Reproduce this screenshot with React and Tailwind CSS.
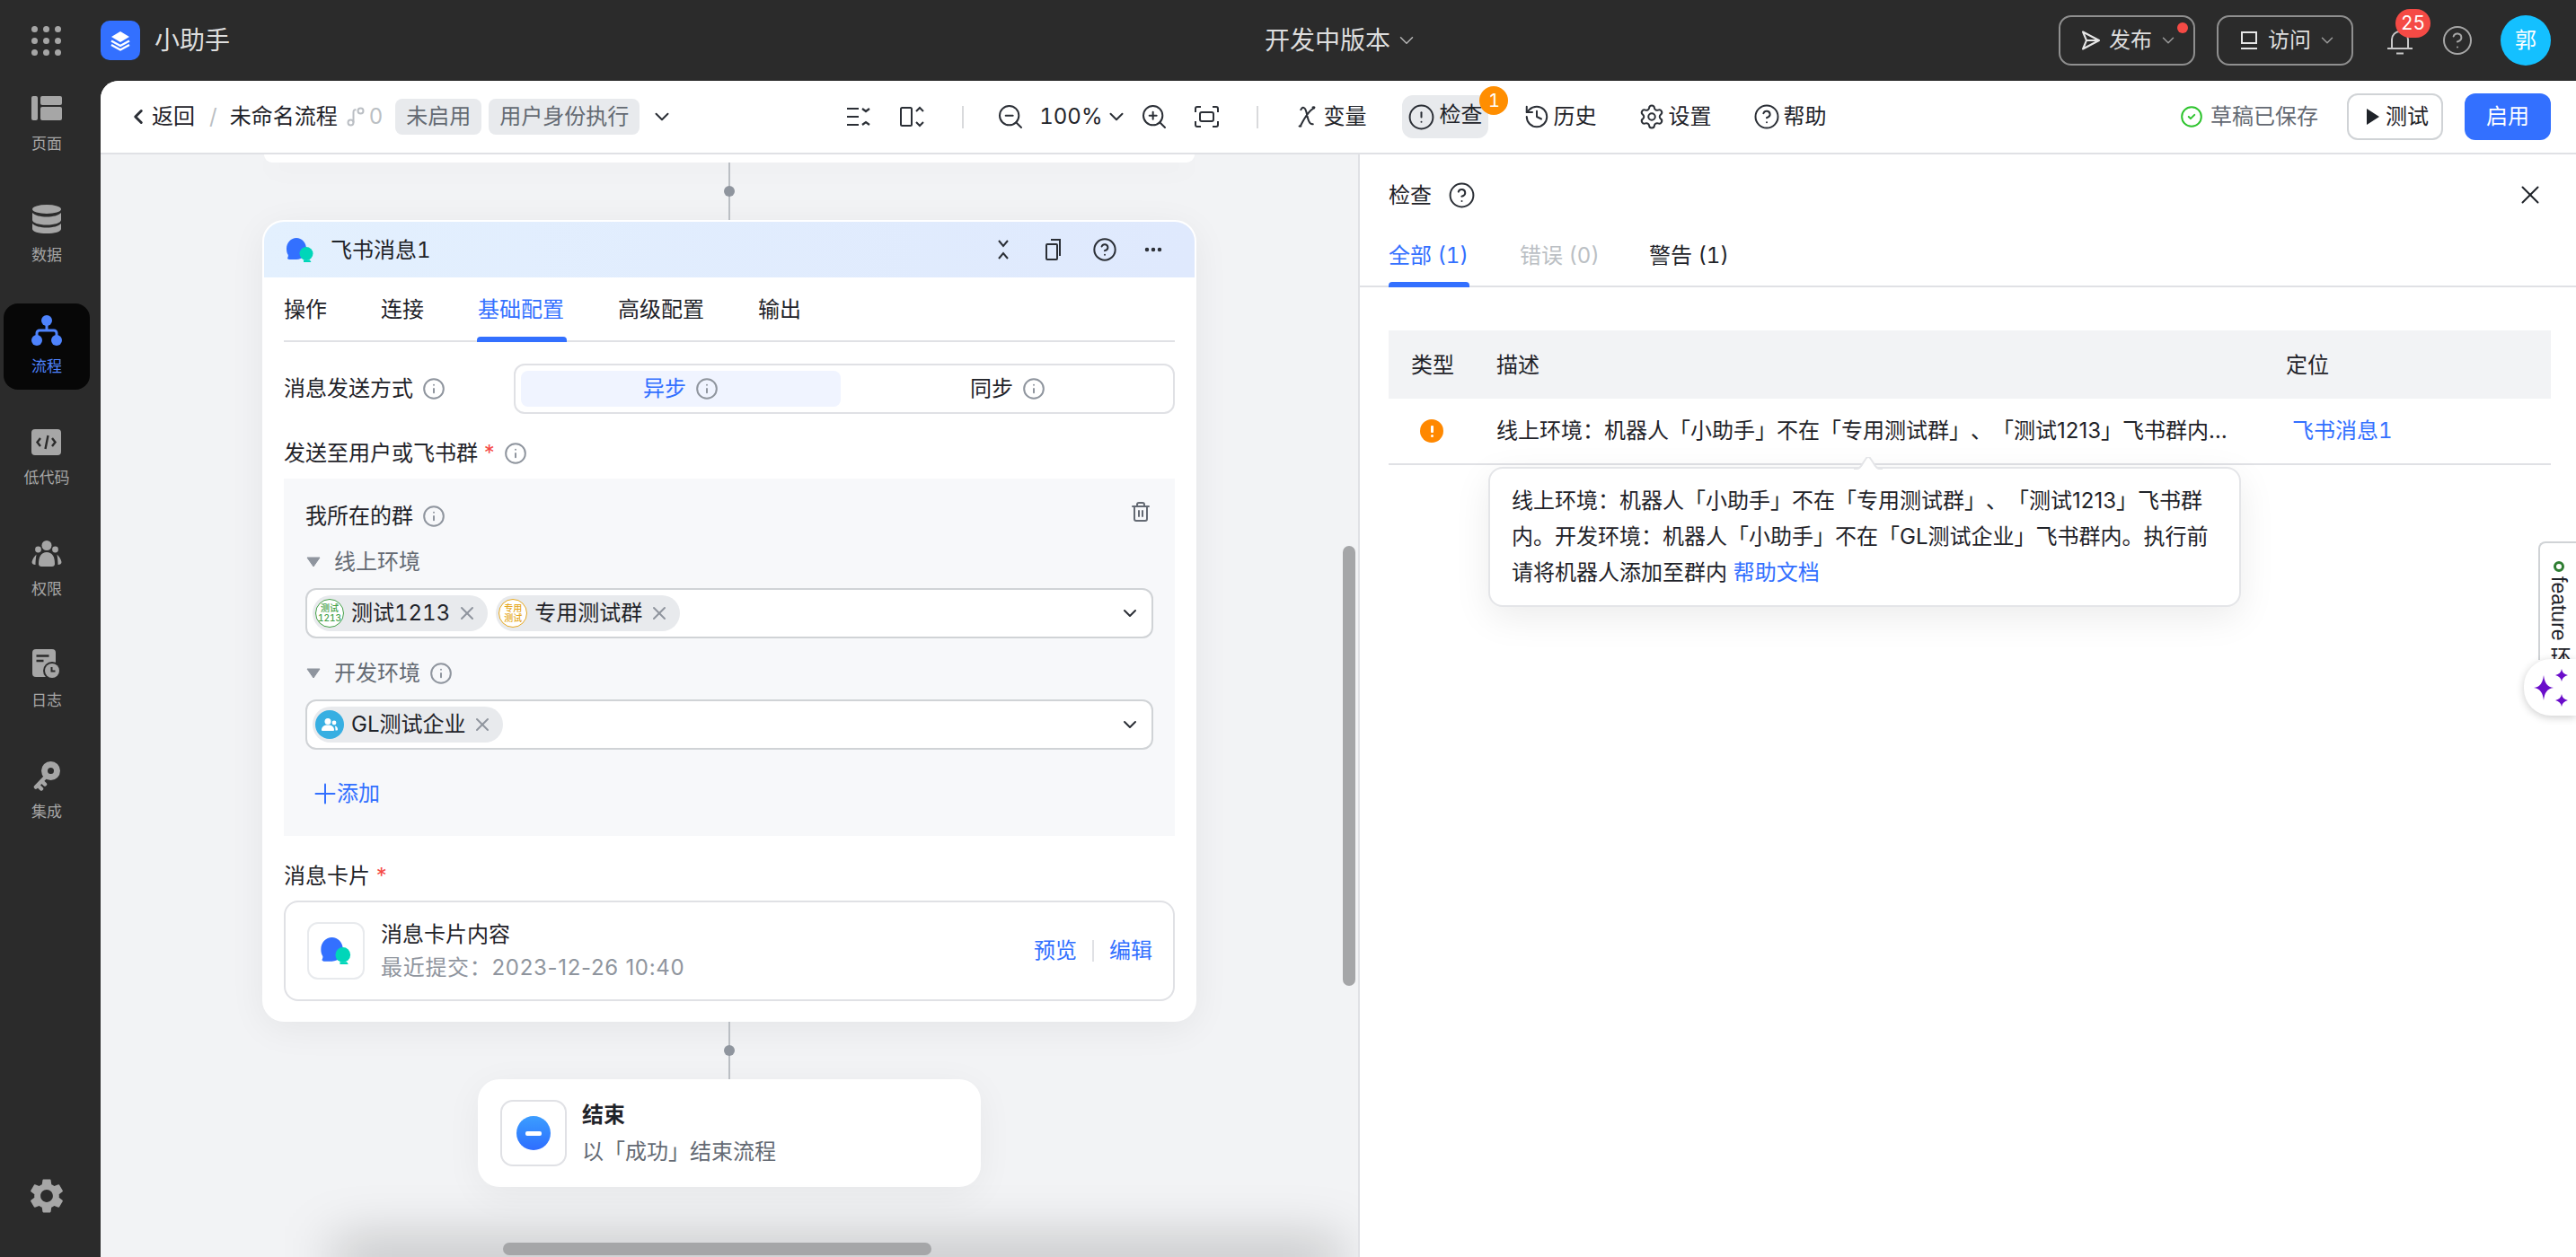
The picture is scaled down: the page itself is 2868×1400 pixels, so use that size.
import React from "react";
import { ChevronDown, ChevronLeft, CircleAlert, CircleCheck, CircleHelp, Ellipsis, History, Info, Settings, Trash2, X, ZoomIn, ZoomOut, Plus } from "lucide-react";
import { MdSettings } from "react-icons/md";

const Sp = (p) => <span {...p} />;

function LogoIcon() {
  return (
    <svg width="24" height="24" viewBox="0 0 24 24" fill="none">
      <path d="M12 2 L22 8 L12 14 L2 8 Z" fill="#fff" />
      <path d="M2 12.5 L12 18 L22 12.5" stroke="#fff" strokeWidth="2.4" strokeLinejoin="round" />
      <path d="M2 17 L12 22.5 L22 17" stroke="#fff" strokeWidth="2.4" strokeLinejoin="round" />
    </svg>
  );
}

function NavIcon({ name }) {
  const g = "#a6a6a6";
  const d = "#2b2b2b";
  if (name === "pages")
    return (
      <svg width="34" height="27" viewBox="0 0 34 27" fill={g}>
        <rect width="7" height="27" rx="2" />
        <rect x="10" width="24" height="10" rx="2" />
        <rect x="10" y="12" width="24" height="15" rx="2" />
      </svg>
    );
  if (name === "data")
    return (
      <svg width="32" height="32" viewBox="0 0 32 32" fill={g}>
        <ellipse cx="16" cy="5" rx="16" ry="5" />
        <path d="M0 9c3 3 9 4.5 16 4.5S29 12 32 9v8c0 3-7 5.5-16 5.5S0 20 0 17z" />
        <path d="M0 21c3 3 9 4.5 16 4.5S29 24 32 21v6c0 3-7 5-16 5S0 30 0 27z" />
      </svg>
    );
  if (name === "flow")
    return (
      <svg width="34" height="34" viewBox="0 0 34 34" fill="#4e83fd">
        <circle cx="17" cy="6" r="6" />
        <circle cx="6" cy="28" r="6" />
        <circle cx="28" cy="28" r="6" />
        <path d="M17 10v7M6 25v-5a3 3 0 0 1 3-3h16a3 3 0 0 1 3 3v5" fill="none" stroke="#4e83fd" strokeWidth="3" />
      </svg>
    );
  if (name === "code")
    return (
      <svg width="34" height="29" viewBox="0 0 34 29">
        <rect width="33" height="29" rx="4" fill={g} />
        <path d="M10 10l-3.5 4.5L10 19M23 10l3.5 4.5L23 19M18.5 7l-3 15" fill="none" stroke={d} strokeWidth="2.4" />
      </svg>
    );
  if (name === "perm")
    return (
      <svg width="34" height="29" viewBox="0 0 34 29" fill={g}>
        <circle cx="17" cy="5.5" r="5.5" />
        <circle cx="7.5" cy="10" r="3.4" />
        <circle cx="26.5" cy="10" r="3.4" />
        <path d="M8 26c0-8 3-13 9-13s9 5 9 13c0 2-1.500 3-3 3H11c-1.500 0-3-1-3-3z" />
        <path d="M5.500 15.500C3 18 1 21 0.500 24c0 2 1.500 3 4 3 0-4 .5-8 1-11.500zM28.500 15.500c2.500 2.500 4.500 5.500 5 8.500 0 2-1.500 3-4 3 0-4-.5-8-1-11.500z" />
      </svg>
    );
  if (name === "log")
    return (
      <svg width="32" height="34" viewBox="0 0 32 34">
        <rect width="26" height="31" rx="4" fill={g} />
        <path d="M4.500 7.500h14M4.500 13h8" stroke={d} strokeWidth="2.4" />
        <circle cx="22" cy="24" r="10" fill={d} />
        <circle cx="22" cy="24" r="8" fill={g} />
        <path d="M21.500 20v4.500h4" fill="none" stroke={d} strokeWidth="2" />
      </svg>
    );
  return (
    <svg width="30" height="33" viewBox="0 0 30 33">
      <circle cx="19.500" cy="10.500" r="10.500" fill={g} />
      <circle cx="19.500" cy="10.500" r="3.500" fill={d} />
      <path d="M14 17L3 28.500M5 26.500l4 4M9.500 22l3.500 3.500" stroke={g} strokeWidth="4.500" fill="none" strokeLinecap="round" />
    </svg>
  );
}

function NavItem({ icon, label, active }) {
  return (
    <div className={active ? "flex h-[96px] w-[96px] flex-col items-center rounded-[16px] bg-[#070707]" : "flex h-[96px] w-[96px] flex-col items-center"}>
      <div className="flex h-[60px] items-center justify-center">
        <NavIcon name={icon} />
      </div>
      <Sp className={active ? "text-[17px] leading-[20px] text-[#4e83fd]" : "text-[17px] leading-[20px] text-[#a6a6a6]"}>{label}</Sp>
    </div>
  );
}

function FeishuIcon({ w = 32, h = 27 }) {
  return (
    <svg width={w} height={h} viewBox="0 0 32 27">
      <path d="M1 12C1 5 6 0 12 0s11 5 11 12-4 12-11 12H4c-1 0-2-1-2-1.500.8-1.500 1-2.500 .8-3.500C1.500 17 1 15 1 12z" fill="#3370ff" />
      <circle cx="23" cy="17.500" r="7.500" fill="#00d6b9" />
      <path d="M20 24.500h7c.5 1 .8 1.800 1.500 2.500H20z" fill="#00d6b9" />
    </svg>
  );
}

function Connector() {
  return (
    <div className="relative flex h-[64px] w-[12px] shrink-0 justify-center">
      <div className="h-full w-[2px] bg-[#bbbfc4]" />
      <div className="absolute top-[26px] h-[12px] w-[12px] rounded-full bg-[#8f959e]" />
    </div>
  );
}

const InfoI = ({ color = "#8f959e" }) => <Info size={26} color={color} strokeWidth={2} absoluteStrokeWidth className="shrink-0" />;

function Chip({ children, avatar }) {
  return (
    <div className="flex h-[40px] items-center rounded-full bg-[#e8eaed] pl-[3px] pr-[11px]">
      {avatar}
      <Sp className="ml-[8px] whitespace-nowrap text-[#1f2329]">{children}</Sp>
      <X size={24} color="#8f959e" strokeWidth={2} absoluteStrokeWidth className="ml-[7px]" />
    </div>
  );
}

function TextAvatar({ a, b, color }) {
  return (
    <div className="flex h-[32px] w-[32px] shrink-0 flex-col items-center justify-center rounded-full border-[1.5px] bg-white text-[10px] font-medium leading-[11px]" style={{ borderColor: color, color }}>
      <Sp>{a}</Sp>
      <Sp>{b}</Sp>
    </div>
  );
}

function TeamAvatar() {
  return (
    <div className="flex h-[32px] w-[32px] shrink-0 items-center justify-center rounded-full bg-[#37afe2]">
      <svg width="18" height="14" viewBox="0 0 18 14" fill="#fff">
        <circle cx="7" cy="3.500" r="3.500" />
        <path d="M0 13c0-3.500 2.500-5.500 7-5.500s7 2 7 5.500c0 .5-.5 1-1 1H1c-.5 0-1-.5-1-1z" />
        <circle cx="14" cy="5" r="2.400" />
        <path d="M15 8.500c2 .5 3 2 3 4 0 .5-.5 1-1 1h-1.500c0-2-.2-3.500-.5-5z" />
      </svg>
    </div>
  );
}

function SelectBox({ children }) {
  return (
    <div className="flex h-[56px] items-center gap-[9px] rounded-[12px] border-2 border-[#d0d3d6] bg-white pl-[6px] pr-[12px]">
      {children}
      <ChevronDown size={24} color="#2b2f36" strokeWidth={2} absoluteStrokeWidth className="ml-auto" />
    </div>
  );
}

function EnvTitle({ children, info }) {
  return (
    <div className="flex h-[32px] items-center text-[#646a73]">
      <svg width="16" height="12" viewBox="0 0 16 12" className="ml-[1px]">
        <path d="M1 1h14L8 11z" fill="#8f959e" stroke="#8f959e" strokeLinejoin="round" />
      </svg>
      <Sp className="ml-[15px]">{children}</Sp>
      {info && <div className="ml-[10px]"><InfoI /></div>}
    </div>
  );
}

function FlowCard() {
  return (
    <div className="w-[1040px] shrink-0 overflow-hidden rounded-[24px] border-2 border-white bg-white shadow-[0_8px_40px_rgba(0,0,0,0.06)]">
      <div className="flex h-[62px] items-center bg-gradient-to-r from-[#e3f0fe] to-[#dfe9fd] pl-[24px] pr-[34px]">
        <FeishuIcon />
        <Sp className="ml-[18px] pt-[2px]">飞书消息1</Sp>
        <div className="ml-auto flex items-center">
          <svg width="14" height="24" viewBox="0 0 14 24" fill="none" stroke="#2b2f36" strokeWidth="2">
            <path d="M2 2l5 6 5-6M2 22l5-6 5 6" />
          </svg>
          <svg width="20" height="26" viewBox="0 0 20 26" fill="none" stroke="#2b2f36" strokeWidth="2" className="ml-[39px]">
            <rect x="2" y="7" width="12" height="17" rx="1" />
            <path d="M7 2h10v18" />
          </svg>
          <CircleHelp size={28} color="#2b2f36" strokeWidth={2} absoluteStrokeWidth className="ml-[33px]" />
          <Ellipsis size={24} color="#2b2f36" strokeWidth={2.500} className="ml-[28px]" />
        </div>
      </div>
      <div className="px-[22px] pb-[21px]">
        <div className="flex h-[72px] gap-[60px] border-b-2 border-[#e0e1e5]">
          <Sp className="flex items-center pt-[2px]">操作</Sp>
          <Sp className="flex items-center pt-[2px]">连接</Sp>
          <Sp className="relative flex items-center pt-[2px] text-[#3370ff]">
            基础配置
            <Sp className="absolute -bottom-[2px] -left-[1px] -right-[3px] h-[6px] rounded-t-[4px] bg-[#3370ff]" />
          </Sp>
          <Sp className="flex items-center pt-[2px]">高级配置</Sp>
          <Sp className="flex items-center pt-[2px]">输出</Sp>
        </div>
        <div className="mt-[24px] flex items-center">
          <div className="flex w-[256px] items-center gap-[10px]">消息发送方式<InfoI /></div>
          <div className="flex h-[56px] w-[736px] items-center gap-[8px] rounded-[12px] border-2 border-[#e0e1e5] p-[6px]">
            <div className="flex h-[40px] flex-1 items-center justify-center gap-[10px] rounded-[8px] bg-[#f0f4ff] text-[#3370ff]">异步<InfoI /></div>
            <div className="flex h-[40px] flex-1 items-center justify-center gap-[10px]">同步<InfoI /></div>
          </div>
        </div>
        <div className="mt-[28px] flex h-[32px] items-center">
          发送至用户或飞书群<Sp className="ml-[5px] text-[#f54a45]">*</Sp>
          <div className="ml-[8px]"><InfoI /></div>
        </div>
        <div className="mt-[12px] bg-[#f7f8fa] px-[24px] pb-[31px] pt-[26px]">
          <div className="flex h-[32px] items-center gap-[10px]">
            我所在的群<InfoI />
            <Trash2 size={24} color="#646a73" strokeWidth={2} absoluteStrokeWidth className="-mt-[10px] ml-auto mr-[2px]" />
          </div>
          <div className="mt-[19px]"><EnvTitle>线上环境</EnvTitle></div>
          <div className="mt-[13px]">
            <SelectBox>
              <Chip avatar={<TextAvatar a="测试" b="1213" color="#43a047" />}>测试1213</Chip>
              <Chip avatar={<TextAvatar a="专用" b="测试" color="#e5a823" />}>专用测试群</Chip>
            </SelectBox>
          </div>
          <div className="mt-[23px]"><EnvTitle info>开发环境</EnvTitle></div>
          <div className="mt-[13px]">
            <SelectBox>
              <Chip avatar={<TeamAvatar />}>GL测试企业</Chip>
            </SelectBox>
          </div>
          <div className="mt-[33px] flex h-[32px] items-center text-[#3370ff]">
            <Plus size={36} color="#3370ff" strokeWidth={2} absoluteStrokeWidth className="-mr-[5px] ml-[4px]" />
            添加
          </div>
        </div>
        <div className="mt-[28px] flex h-[32px] items-center pt-[2px]">消息卡片<Sp className="ml-[5px] text-[#f54a45]">*</Sp></div>
        <div className="mt-[12px] flex h-[112px] items-center rounded-[16px] border-2 border-[#e0e1e5] pl-[24px] pr-[23px]">
          <div className="flex h-[64px] w-[64px] items-center justify-center rounded-[12px] border-2 border-[#e8eaed]">
            <FeishuIcon w={36} h={30} />
          </div>
          <div className="ml-[18px] flex flex-col gap-[5px]">
            <Sp>消息卡片内容</Sp>
            <Sp className="normal-nums tracking-[0.7px] text-[#8f959e]">最近提交：2023-12-26 10:40</Sp>
          </div>
          <div className="ml-auto flex items-center text-[#3370ff]">
            预览
            <Sp className="mx-[17px] h-[24px] w-[2px] bg-[#e0e1e5]" />
            编辑
          </div>
        </div>
      </div>
    </div>
  );
}

function EndCard() {
  return (
    <div className="flex h-[120px] w-[560px] shrink-0 items-center rounded-[24px] bg-white pl-[25px] shadow-[0_8px_40px_rgba(0,0,0,0.05)]">
      <div className="flex h-[74px] w-[74px] items-center justify-center rounded-[14px] border-2 border-[#e0e1e5]">
        <div className="flex h-[38px] w-[38px] items-center justify-center rounded-full bg-gradient-to-b from-[#3c9dff] to-[#2f6dff]">
          <div className="h-[5px] w-[18px] rounded-[2px] bg-white" />
        </div>
      </div>
      <div className="ml-[17px] flex flex-col gap-[9px]">
        <Sp className="font-semibold">结束</Sp>
        <Sp className="text-[#646a73]">以「成功」结束流程</Sp>
      </div>
    </div>
  );
}

function Canvas() {
  return (
    <div className="relative flex flex-1 flex-col items-center overflow-hidden bg-[#f2f3f5]">
      <div className="h-[9px] w-[1036px] shrink-0 rounded-b-[20px] bg-white shadow-[0_8px_30px_rgba(0,0,0,0.04)]" />
      <Connector />
      <FlowCard />
      <Connector />
      <EndCard />
      <div className="absolute -bottom-[24px] left-[260px] right-[20px] h-[40px] bg-black/25 blur-[30px]" />
      <div className="absolute bottom-[2px] left-[448px] h-[14px] w-[477px] rounded-full bg-[#a5a6a8]" />
      <div className="absolute right-[3px] top-[436px] h-[490px] w-[14px] rounded-full bg-[#a5a6a8]" />
    </div>
  );
}

function Panel() {
  const full = "线上环境：机器人「小助手」不在「专用测试群」、「测试1213」飞书群内。开发环境：机器人「小助手」不在「GL测试企业」飞书群内。执行前请将机器人添加至群内";
  return (
    <div className="relative w-[1356px] shrink-0 border-l-2 border-[#e0e1e5] bg-white">
      <div className="flex h-[62px] items-end pl-[32px] pr-[34px]">
        <Sp>检查</Sp>
        <CircleHelp size={31} color="#2b2f36" strokeWidth={2} absoluteStrokeWidth className="mb-[1px] ml-[18px]" />
        <X size={34} color="#1f2329" strokeWidth={2} absoluteStrokeWidth className="ml-auto" />
      </div>
      <div className="flex border-b-2 border-[#e0e1e5] pb-[17px] pl-[32px] pt-[35px]">
        <Sp className="relative w-[90px] whitespace-nowrap text-[#3370ff]">
          全部 (1)
          <Sp className="absolute -bottom-[19px] left-0 h-[6px] w-[90px] rounded-t-[4px] bg-[#3370ff]" />
        </Sp>
        <Sp className="ml-[56px] w-[90px] whitespace-nowrap text-[#bbbfc4]">错误 (0)</Sp>
        <Sp className="ml-[54px] w-[90px] whitespace-nowrap">警告 (1)</Sp>
      </div>
      <div className="ml-[32px] mr-[28px] mt-[48px]">
        <div className="grid h-[76px] grid-cols-[120px_879px_1fr] items-center bg-[#f2f3f5] pt-[2px]">
          <Sp className="pl-[25px]">类型</Sp>
          <Sp>描述</Sp>
          <Sp>定位</Sp>
        </div>
        <div className="grid h-[74px] grid-cols-[120px_879px_1fr] items-center border-b-2 border-[#e0e1e5]">
          <div className="pl-[35px]">
            <div className="flex h-[26px] w-[26px] items-center justify-center rounded-full bg-[#ff8800]">
              <div className="flex flex-col items-center gap-[2px]">
                <Sp className="h-[8px] w-[3px] rounded-[1px] bg-white" />
                <Sp className="h-[3px] w-[3px] rounded-full bg-white" />
              </div>
            </div>
          </div>
          <Sp className="w-[826px] truncate normal-nums">{full}</Sp>
          <Sp className="pl-[7px] text-[#3370ff]">飞书消息1</Sp>
        </div>
      </div>
      <div className="absolute left-[143px] top-[348px] w-[838px] rounded-[16px] border-2 border-[#e4e5e8] bg-white px-[24px] py-[16px] normal-nums leading-[40px] shadow-[0_12px_40px_rgba(0,0,0,0.08)]">
        <svg width="32" height="14" viewBox="0 0 32 14" className="absolute -top-[13px] left-[405px]">
          <path d="M0 14h3c3 0 5-2 7-6l4-7c1-1.500 3-1.500 4 0l4 7c2 4 4 6 7 6h3z" fill="#fff" />
          <path d="M0 13h3c3 0 5-2 7-6l4-6c1-1.200 3-1.200 4 0l4 6c2 4 4 6 7 6h3" fill="none" stroke="#e4e5e8" strokeWidth="2" />
        </svg>
        {full} <Sp className="text-[#3370ff]">帮助文档</Sp>
      </div>
    </div>
  );
}

function ToolBtn({ icon, children, cls }) {
  return (
    <div className={"flex items-center gap-[3px] " + cls}>
      {icon}
      <Sp className="whitespace-nowrap">{children}</Sp>
    </div>
  );
}

function Toolbar() {
  const ic = { color: "#2b2f36", strokeWidth: 2, absoluteStrokeWidth: true };
  return (
    <div className="flex h-[82px] shrink-0 items-center border-b-2 border-[#e0e1e5] bg-white pl-[29px] pr-[28px]">
      <ChevronLeft size={26} {...ic} strokeWidth={3} />
      <Sp className="ml-[2px]">返回</Sp>
      <Sp className="ml-[16px] text-[#bbbfc4]">/</Sp>
      <Sp className="ml-[14px]">未命名流程</Sp>
      <svg width="20" height="22" viewBox="0 0 20 22" fill="none" stroke="#bbbfc4" strokeWidth="2" className="ml-[10px]">
        <circle cx="4.500" cy="17.500" r="3" />
        <circle cx="15.500" cy="4.500" r="3" />
        <path d="M7.500 17.500V6c0-2 1-3 3-2.500" />
      </svg>
      <Sp className="ml-[5px] text-[#bbbfc4]">0</Sp>
      <Sp className="ml-[14px] flex h-[40px] w-[96px] items-center justify-center rounded-[8px] bg-[#e8eaed] text-[#646a73]">未启用</Sp>
      <Sp className="ml-[8px] flex h-[40px] w-[168px] items-center justify-center rounded-[8px] bg-[#e8eaed] text-[#646a73]">用户身份执行</Sp>
      <ChevronDown size={26} {...ic} className="ml-[12px]" />

      <svg width="26" height="22" viewBox="0 0 26 22" fill="none" stroke="#2b2f36" strokeWidth="2.200" className="ml-[193px]">
        <path d="M0 2h13M0 11h13M0 20h13M17 2l4 3 4-3M17 20l4-3 4 3" />
      </svg>
      <svg width="27" height="24" viewBox="0 0 27 24" fill="none" stroke="#2b2f36" strokeWidth="2" className="ml-[33px]">
        <rect x="1" y="2" width="12" height="20" rx="1.500" />
        <path d="M18 6l4-4 4 4M18 18l4 4 4-4" />
      </svg>
      <Sp className="ml-[42px] h-[25px] w-[2px] bg-[#d9dadc]" />
      <ZoomOut size={32} {...ic} className="ml-[36px]" />
      <Sp className="ml-[16px]">100%</Sp>
      <ChevronDown size={26} {...ic} className="ml-[3px]" />
      <ZoomIn size={32} {...ic} className="ml-[13px]" />
      <svg width="27" height="24" viewBox="0 0 27 24" fill="none" stroke="#2b2f36" strokeWidth="2" className="ml-[29px]">
        <path d="M1 7V3a2 2 0 0 1 2-2h4M20 1h4a2 2 0 0 1 2 2v4M1 17v4a2 2 0 0 0 2 2h4M20 23h4a2 2 0 0 0 2-2v-4" />
        <rect x="6" y="7" width="15" height="10" rx="2" />
      </svg>
      <Sp className="ml-[42px] h-[25px] w-[2px] bg-[#d9dadc]" />
      <ToolBtn
        cls="ml-[42px] gap-[6px]"
        icon={
          <svg width="24" height="28" viewBox="0 0 24 28" fill="none" stroke="#2b2f36" strokeWidth="2">
            <path d="M5 7C7 2 10 3 11.500 9c1.500 7 3 15 8 13M21 4c-6 2-12 12-16 20M3 24c1 1 2 1 3 0M18 4c1-1 2-1 3 0" />
          </svg>
        }
      >
        变量
      </ToolBtn>
      <div className="relative ml-[40px] flex h-[48px] w-[96px] items-center gap-[4px] rounded-[12px] bg-[#e8eaed] pl-[6px]">
        <CircleAlert size={31} {...ic} />
        <Sp className="-mt-[4px]">检查</Sp>
        <Sp className="absolute -right-[22px] -top-[10px] flex h-[32px] w-[32px] items-center justify-center rounded-full bg-[#ff8e00] text-[20px] text-white">1</Sp>
      </div>
      <ToolBtn cls="ml-[39px]" icon={<History size={30} {...ic} />}>历史</ToolBtn>
      <ToolBtn cls="ml-[47px]" icon={<Settings size={30} {...ic} />}>设置</ToolBtn>
      <ToolBtn cls="ml-[47px]" icon={<CircleHelp size={30} {...ic} />}>帮助</ToolBtn>

      <div className="ml-auto flex items-center">
        <CircleCheck size={26} color="#2ec42e" strokeWidth={2} absoluteStrokeWidth />
        <Sp className="ml-[8px] text-[#646a73]">草稿已保存</Sp>
        <div className="ml-[32px] flex h-[52px] w-[107px] items-center gap-[7px] rounded-[12px] border-2 border-[#d0d3d6] pl-[20px]">
          <svg width="14" height="20" viewBox="0 0 14 20"><path d="M0 1l14 9L0 19z" fill="#1f2329" /></svg>
          测试
        </div>
        <Sp className="ml-[24px] flex h-[52px] w-[96px] items-center justify-center rounded-[12px] bg-[#3370ff] text-white">启用</Sp>
      </div>
    </div>
  );
}

function TopBar() {
  return (
    <div className="flex h-[90px] shrink-0 items-center text-[#dedede]">
      <div className="flex w-[1408px] shrink-0 items-center pl-[35px]">
        <div className="grid w-[33px] grid-cols-3 gap-[6px]">
          {[0, 1, 2, 3, 4, 5, 6, 7, 8].map((i) => (
            <Sp key={i} className="h-[7px] w-[7px] rounded-full bg-[#a6a6a6]" />
          ))}
        </div>
        <div className="ml-[44px] flex h-[44px] w-[44px] items-center justify-center rounded-[10px] bg-[#3370ff]">
          <LogoIcon />
        </div>
        <Sp className="ml-[16px] text-[28px]">小助手</Sp>
      </div>
      <Sp className="text-[28px]">开发中版本</Sp>
      <ChevronDown size={26} color="#b5b5b5" strokeWidth={1.500} absoluteStrokeWidth className="ml-[5px]" />
      <div className="ml-auto flex items-center pr-[28px]">
        <div className="relative flex h-[56px] w-[152px] items-center rounded-[14px] border-2 border-[#8f8f8f] pl-[24px]">
          <svg width="20" height="22" viewBox="0 0 20 22" fill="none" stroke="#e6e6e6" strokeWidth="2" strokeLinejoin="round">
            <path d="M1 1.500L19 11 1 20.500 5 11zM5 11h14" />
          </svg>
          <Sp className="ml-[10px]">发布</Sp>
          <ChevronDown size={22} color="#9a9a9a" strokeWidth={1.500} absoluteStrokeWidth className="ml-[7px]" />
          <Sp className="absolute right-[6px] top-[6px] h-[12px] w-[12px] rounded-full bg-[#f54a45]" />
        </div>
        <div className="ml-[24px] flex h-[56px] w-[152px] items-center rounded-[14px] border-2 border-[#8f8f8f] pl-[24px]">
          <svg width="20" height="20" viewBox="0 0 20 20" fill="none" stroke="#e6e6e6" strokeWidth="2">
            <path d="M2 1h16v12H2zM1 19h18" />
          </svg>
          <Sp className="ml-[11px]">访问</Sp>
          <ChevronDown size={22} color="#9a9a9a" strokeWidth={1.500} absoluteStrokeWidth className="ml-[7px]" />
        </div>
        <div className="relative ml-[38px] mt-[3px]">
          <svg width="28" height="28" viewBox="0 0 28 28" fill="none" stroke="#c8c8c8" strokeWidth="2" className="block">
            <path d="M5 21V11a9 9 0 0 1 18 0v10M0 21h28M10 26.500h8" />
          </svg>
          <Sp className="absolute -top-[23px] left-[9px] flex h-[32px] w-[39px] items-center justify-center rounded-full bg-[#f54a45] text-[21px] text-white">25</Sp>
        </div>
        <CircleHelp size={36} color="#a6a6a6" strokeWidth={2} absoluteStrokeWidth className="ml-[32px]" />
        <Sp className="ml-[30px] flex h-[56px] w-[56px] items-center justify-center rounded-full bg-[#14c0ff] text-white">郭</Sp>
      </div>
    </div>
  );
}

function Sidebar() {
  return (
    <div className="flex w-[112px] shrink-0 flex-col gap-[28px] pl-[4px]">
      <NavItem icon="pages" label="页面" />
      <NavItem icon="data" label="数据" />
      <NavItem icon="flow" label="流程" active />
      <NavItem icon="code" label="低代码" />
      <NavItem icon="perm" label="权限" />
      <NavItem icon="log" label="日志" />
      <NavItem icon="key" label="集成" />
      <div className="mb-[45px] mt-auto flex w-[96px] justify-center">
        <MdSettings size={46} color="#a6a6a6" />
      </div>
    </div>
  );
}

function Floating() {
  return (
    <div className="absolute right-0 top-[603px] flex flex-col items-end">
      <div className="flex h-[132px] w-[42px] flex-col items-center overflow-hidden rounded-tl-[8px] border-l-2 border-t-2 border-[#d0d3d6] bg-white pl-[2px] pt-[20px]">
        <Sp className="h-[12px] w-[12px] shrink-0 rounded-full border-[3px] border-[#2e7d32]" />
        <Sp className="mt-[5px] whitespace-nowrap text-[23px] leading-[24px] [font-family:'Liberation_Sans','Noto_Sans_CJK_SC',sans-serif] [writing-mode:vertical-rl]">feature 环境</Sp>
      </div>
      <div className="-mt-[1px] flex h-[63px] w-[58px] items-center justify-center rounded-l-[30px] bg-white pl-[3px] shadow-[0_2px_10px_rgba(0,0,0,0.2)]">
        <svg width="40" height="42" viewBox="0 0 40 42" fill="#6a0dca">
          <path d="M11 7c1 8 3.500 13 11 14-7.500 1-10 6-11 14-1-8-3.500-13-11-14 7.500-1 10-6 11-14z" />
          <path d="M31 0c.7 4 3 6 7 7-4 1-6.300 3-7 7-.7-4-3-6-7-7 4-1 6.300-3 7-7zM31 28c.7 4 3 6 7 7-4 1-6.300 3-7 7-.7-4-3-6-7-7 4-1 6.300-3 7-7z" />
        </svg>
      </div>
    </div>
  );
}

export default function App() {
  return (
    <div className="relative flex h-[1400px] w-[2868px] flex-col overflow-hidden bg-[#2b2b2b] text-[24px] leading-[32px] text-[#1f2329] tabular-nums [font-family:Inter,'Noto_Sans_CJK_SC',sans-serif] [text-spacing-trim:space-all]">
      <TopBar />
      <div className="flex min-h-0 flex-1">
        <Sidebar />
        <div className="flex min-w-0 flex-1 flex-col overflow-hidden rounded-tl-[20px] bg-white">
          <Toolbar />
          <div className="flex min-h-0 flex-1">
            <Canvas />
            <Panel />
          </div>
        </div>
      </div>
      <Floating />
    </div>
  );
}
